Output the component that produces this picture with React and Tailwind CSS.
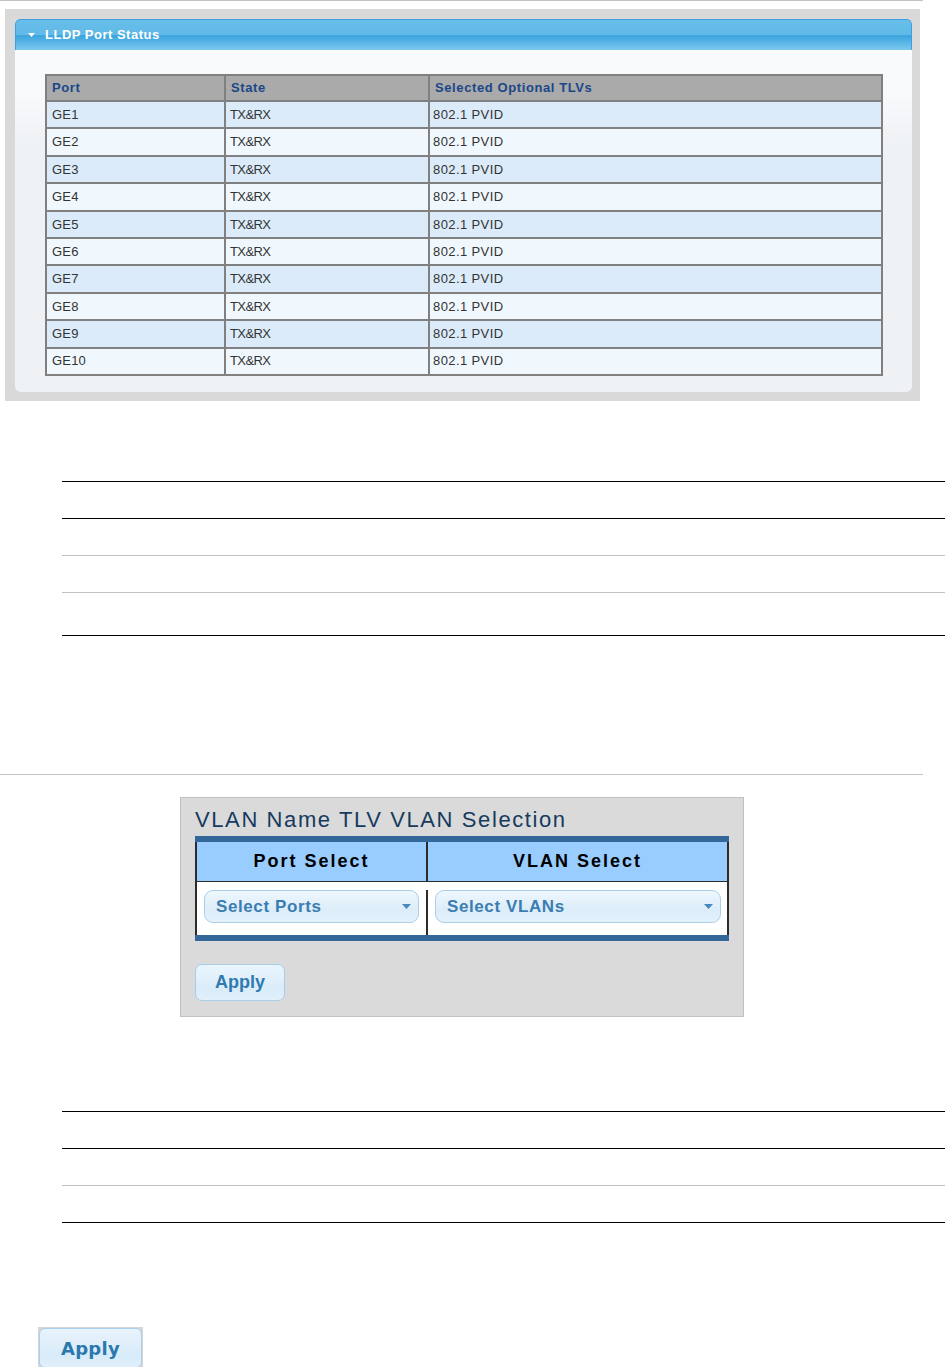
import React from 'react';

const ports = Array.from({ length: 10 }, (_, i) => `GE${i + 1}`);

const Caret = () => (
  <svg width="9" height="5" viewBox="0 0 9 5" className="shrink-0">
    <path d="M0 0h9L4.5 5z" fill="#4a88bb" />
  </svg>
);

const Dropdown = ({ label }) => (
  <div className="flex h-[33px] items-center justify-between rounded-[9px] border border-[#a9cfea] bg-[linear-gradient(to_bottom,#eef7fd,#dcedf9_60%,#e4f1fb)] pl-[11px] pr-[7px]">
    <span className="text-[17px] font-bold tracking-[0.6px] text-[#3b7db1]">{label}</span>
    <Caret />
  </div>
);

const Lines = ({ rows }) => (
  <div className="ml-[62px] border-t border-black">
    {rows.map((r, i) => (
      <div key={i} className={`${r.h} border-b ${r.c}`} />
    ))}
  </div>
);

export default function App() {
  return (
    <div className="relative h-[1367px] w-[945px] overflow-hidden bg-white font-['Liberation_Sans',Arial,sans-serif]">
      <div className="h-px w-[923px] bg-[#c4c4c4]" />

      {/* LLDP Port Status */}
      <div className="ml-[5px] mt-[8px] h-[392px] w-[915px] bg-[#d9d9d9] pb-[9px] pl-[10px] pr-[8px] pt-[10px]">
        <div className="flex h-full flex-col overflow-hidden rounded-t-[5px] rounded-b-[6px]">
          <div className="flex h-[31px] shrink-0 items-center rounded-t-[5px] border border-b-0 border-[#3d9fdf] bg-[linear-gradient(to_bottom,#67bee9_0%,#60b9e7_50%,#3aa4dd_52%,#7dc8ef_100%)] pl-[12px]">
            <svg width="7" height="4" viewBox="0 0 7 4" className="mr-[10px]">
              <path d="M0 0h7L3.5 4z" fill="#ffffff" />
            </svg>
            <span className="text-[13px] font-bold tracking-[0.5px] text-white">LLDP Port Status</span>
          </div>
          <div className="flex-1 bg-[linear-gradient(to_bottom,#f8fafc_0px,#f8fafc_45px,#eff2f5_90px)] pl-[30px] pr-[29px] pt-[24px]">
            <div className="border-2 border-[#808080] text-[13px]">
              <div className="flex h-[26px] border-b-2 border-[#808080] bg-[#aaaaaa] font-bold tracking-[0.6px] text-[#1b4788]">
                <div className="flex w-[179px] items-center border-r-2 border-[#808080] pl-[5px]">Port</div>
                <div className="flex w-[204px] items-center border-r-2 border-[#808080] pl-[5px]">State</div>
                <div className="flex flex-1 items-center pl-[5px]">Selected Optional TLVs</div>
              </div>
              {ports.map((p, i) => (
                <div
                  key={p}
                  className={`flex text-[#333] ${i < 9 ? 'h-[27.4px] border-b-2 border-[#808080]' : 'h-[25.4px]'} ${i % 2 === 0 ? 'bg-[#dbebf9]' : 'bg-[#f0f8fe]'}`}
                >
                  <div className="flex w-[179px] items-center border-r-2 border-[#808080] pl-[5px] tracking-[0.2px]">{p}</div>
                  <div className="flex w-[204px] items-center border-r-2 border-[#808080] pl-[4px] tracking-[-0.6px]">TX&amp;RX</div>
                  <div className="flex flex-1 items-center pl-[3px] tracking-[0.4px]">802.1 PVID</div>
                </div>
              ))}
            </div>
          </div>
        </div>
      </div>

      <div className="mt-[80px]">
        <Lines
          rows={[
            { h: 'h-[37px]', c: 'border-black' },
            { h: 'h-[37px]', c: 'border-[#c0c0c0]' },
            { h: 'h-[37px]', c: 'border-[#c0c0c0]' },
            { h: 'h-[43px]', c: 'border-black' },
          ]}
        />
      </div>

      <div className="mt-[138px] h-px w-[923px] bg-[#c4c4c4]" />

      {/* VLAN Name TLV VLAN Selection */}
      <div className="ml-[180px] mt-[22px] h-[220px] w-[564px] border border-[#c0c0c0] bg-[#dadada] pl-[14px] pt-[10px]">
        <div className="text-[22px] leading-[24px] tracking-[1.6px] text-[#163a5e]">VLAN Name TLV VLAN Selection</div>
        <div className="mt-[4px] w-[534px]">
          <div className="h-[6px] bg-[#336699]" />
          <div className="border-x-2 border-[#2b2b2b]">
            <div className="flex h-[40px] border-b border-[#2b2b2b] bg-[#99ccff] text-[18px] font-bold tracking-[2px] text-black">
              <div className="flex w-[231px] items-center justify-center border-r-2 border-[#2b2b2b]">Port Select</div>
              <div className="flex flex-1 items-center justify-center">VLAN Select</div>
            </div>
            <div className="flex h-[53px] bg-white pt-[8px]">
              <div className="w-[231px] border-r-2 border-[#2b2b2b] pl-[7px] pr-[7px]">
                <Dropdown label="Select Ports" />
              </div>
              <div className="flex-1 pl-[7px] pr-[6px]">
                <Dropdown label="Select VLANs" />
              </div>
            </div>
          </div>
          <div className="h-[6px] bg-[#336699]" />
        </div>
        <button className="mt-[23px] flex h-[37px] w-[90px] items-center justify-center rounded-[7px] border border-[#a6cde9] bg-[linear-gradient(to_bottom,#eaf5fd,#d9ecf9_70%,#e2f0fa)] text-[18px] font-bold text-[#2f7bb0]">
          Apply
        </button>
      </div>

      <div className="mt-[94px]">
        <Lines
          rows={[
            { h: 'h-[37px]', c: 'border-black' },
            { h: 'h-[37px]', c: 'border-[#c0c0c0]' },
            { h: 'h-[37px]', c: 'border-black' },
          ]}
        />
      </div>

      <div className="ml-[38px] mt-[104px] w-[105px] bg-[#d6d6d6] p-px">
        <button className="flex h-[40px] w-full items-center justify-center rounded-[6px] border border-[#a9cfee] bg-[linear-gradient(to_bottom,#e8f3fc,#d8ebf9_70%,#e2f0fb)] font-['DejaVu_Sans',sans-serif] text-[18px] font-bold tracking-[0.3px] text-[#2a78ad]">
          Apply
        </button>
      </div>
    </div>
  );
}
